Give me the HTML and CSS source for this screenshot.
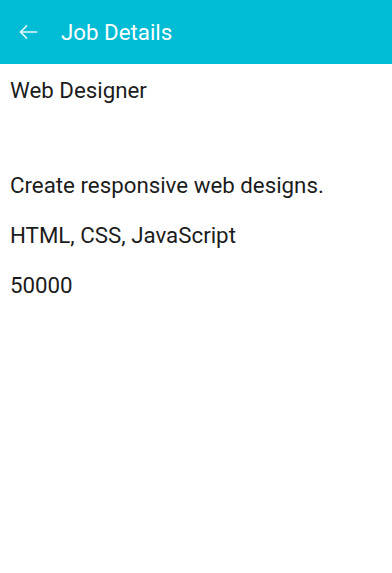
FILE: index.html
```html
<!DOCTYPE html>
<html>
<head>
<meta charset="utf-8">
<link rel="stylesheet" href="styles.css">
</head>
<body>
<header class="appbar">
  <svg class="back" width="24" height="24" viewBox="0 0 24 24"><path d="M20.5 12H4.5M10.5 6L4.5 12L10.5 18" fill="none" stroke="#fff" stroke-width="1.7" stroke-linecap="round" stroke-linejoin="round" opacity="0.9"/></svg>
  <h1 class="title">Job Details</h1>
</header>
<main class="content">
  <p class="field">Web Designer</p>
  <p class="field empty"></p>
  <p class="field">Create responsive web designs.</p>
  <p class="field">HTML, CSS, JavaScript</p>
  <p class="field">50000</p>
</main>
</body>
</html>
```
FILE: styles.css
```css
html, body { margin: 0; padding: 0; background: #fff; }
body { font-family: Roboto, "Noto Sans", sans-serif; color: #1c1c1c; }
.appbar {
  height: 64px;
  background: #00bcd4;
  display: flex;
  align-items: center;
  padding-left: 16px;
}
.back { width: 24px; height: 24px; }
.title {
  margin: 0 0 0 21px;
  font-size: 22.3px;
  font-weight: 400;
  color: #fff;
}
.content { padding: 11px 10px; }
.field {
  margin: 0;
  font-size: 22.3px;
  line-height: 30px;
  padding-bottom: 20px;
}
.empty { height: 25px; padding-bottom: 20px; }
```
